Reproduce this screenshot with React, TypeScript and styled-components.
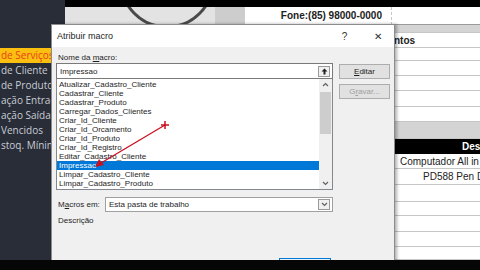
import styled, { createGlobalStyle } from "styled-components";

const GlobalStyle = createGlobalStyle`
  html, body { margin: 0; padding: 0; background: #000; }
  body { width: 480px; height: 270px; overflow: hidden; }
`;

const Page = styled.div`
  width: 480px;
  height: 270px;
  display: flex;
  flex-direction: column;
  background: #000;
`;
const Screen = styled.div`
  position: relative;
  height: 260px;
  display: grid;
  grid-template-columns: 65px 1fr;
  overflow: hidden;
`;
const BottomBand = styled.div`
  height: 10px;
  background: #060606;
`;

const Sidebar = styled.nav`
  background: #292d38;
  display: flex;
  flex-direction: column;
  padding-top: 48px;
`;
const NavItem = styled.div<{ $active?: boolean }>`
  height: 15px;
  line-height: 15px;
  font: 10px "Open Sans", sans-serif;
  white-space: nowrap;
  overflow: hidden;
  padding-left: 1px;
  color: ${p => (p.$active ? "#e8401c" : "#c8ccd4")};
  background: ${p => (p.$active ? "#fbbf10" : "transparent")};
`;

const Main = styled.div`
  display: flex;
  flex-direction: column;
  background: #fff;
  font-family: "Liberation Sans", Arial, sans-serif;
`;
const TopBand = styled.div`
  height: 7px;
  background: #000;
`;
const HeaderRow = styled.div`
  height: 18px;
  display: flex;
`;
const LogoArea = styled.div`
  width: 150px;
  background: #e3e3e3;
  overflow: hidden;
`;
const GrayCell = styled.div`
  width: 30px;
  background: #cdcdcd;
`;
const FoneCell = styled.div`
  width: 147px;
  box-sizing: border-box;
  padding-right: 9px;
  text-align: right;
  font-size: 10px;
  font-weight: bold;
  line-height: 18px;
  color: #222;
  border-right: 1px dashed #c8c8c8;
  border-bottom: 1px solid #9a9a9a;
`;
const BlankCell = styled.div`
  flex: 1;
  border-bottom: 1px solid #9a9a9a;
`;

const SheetBody = styled.div`
  flex: 1;
  display: flex;
`;
const Hidden = styled.div`
  width: 328px;
  background: #f0f0f0;
`;
const SheetCol = styled.div`
  flex: 1;
  display: flex;
  flex-direction: column;
  border-left: 1px solid #7a7a7a;
`;
type RowKind = "plain" | "gray" | "head" | "title";
const SheetRow = styled.div<{ $h: number; $kind: RowKind; $indent?: number }>`
  height: ${p => p.$h}px;
  box-sizing: border-box;
  display: flex;
  align-items: center;
  padding-left: ${p => p.$indent ?? 5}px;
  white-space: nowrap;
  overflow: hidden;
  font-size: 10px;
  font-weight: ${p => (p.$kind === "head" || p.$kind === "title" ? "bold" : "normal")};
  color: ${p => (p.$kind === "head" ? "#fff" : "#222")};
  background: ${p => (p.$kind === "gray" ? "#d4d4d4" : p.$kind === "head" ? "#000" : "#fff")};
  border-bottom: 1px solid ${p => (p.$kind === "head" ? "#000" : "#c6c6c6")};
`;

const Dialog = styled.div`
  position: absolute;
  left: 51px;
  top: 24px;
  width: 342px;
  height: 250px;
  background: #f0f0f0;
  border: 1px solid #8c8c8c;
  box-shadow: 2px 0 3px rgba(0, 0, 0, 0.3);
  font: 8px "Liberation Sans", Arial, sans-serif;
  color: #1e1e1e;
  display: flex;
  flex-direction: column;
`;
const TitleBar = styled.div`
  height: 22px;
  background: #fff;
  display: flex;
  align-items: center;
  padding-left: 5px;
`;
const Title = styled.span`
  flex: 1;
  font-size: 9px;
`;
const TitleBtn = styled.span`
  width: 33px;
  text-align: center;
  font-size: 10px;
  color: #333;
`;
const Body = styled.div`
  padding: 5px 4px 0 4px;
  display: grid;
  grid-template-columns: 277px 51px;
  column-gap: 6px;
`;
const Column = styled.div`
  display: flex;
  flex-direction: column;
`;
const Label = styled.div`
  height: 11px;
  line-height: 11px;
  padding-left: 2px;
`;
const InputBox = styled.div`
  height: 16px;
  box-sizing: border-box;
  background: #fff;
  border: 1px solid #7a7a7a;
  display: flex;
  align-items: center;
  padding-left: 3px;
`;
const InputText = styled.span`
  flex: 1;
`;
const SmallBtn = styled.span`
  width: 12px;
  height: 11px;
  margin-right: 2px;
  box-sizing: border-box;
  border: 1px solid #9a9a9a;
  background: #f0f0f0;
  display: flex;
  align-items: center;
  justify-content: center;
`;
const ListBox = styled.div`
  height: 111px;
  box-sizing: border-box;
  background: #fff;
  border: 1px solid #828790;
  border-top: none;
  display: flex;
`;
const Items = styled.div`
  flex: 1;
  padding-top: 1px;
`;
const Item = styled.div<{ $sel?: boolean }>`
  height: 9px;
  line-height: 9px;
  padding-left: 2px;
  white-space: nowrap;
  color: ${p => (p.$sel ? "#fff" : "#1e1e1e")};
  background: ${p => (p.$sel ? "#0078d7" : "transparent")};
`;
const ScrollBar = styled.div`
  width: 13px;
  background: #f0f0f0;
  display: flex;
  flex-direction: column;
  align-items: center;
`;
const ScrollArrow = styled.div`
  height: 11px;
  width: 13px;
  display: flex;
  align-items: center;
  justify-content: center;
`;
const Thumb = styled.div`
  width: 11px;
  height: 42px;
  margin-top: 2px;
  background: #cdcdcd;
`;
const Spacer = styled.div`
  flex: 1;
`;
const DlgButton = styled.div<{ $disabled?: boolean; $primary?: boolean }>`
  height: 15px;
  box-sizing: border-box;
  border: 1px solid ${p => (p.$primary ? "#0078d7" : "#adadad")};
  background: ${p => (p.$primary ? "#e5f1fb" : "#e1e1e1")};
  color: ${p => (p.$disabled ? "#a0a0a0" : "#1e1e1e")};
  display: flex;
  align-items: center;
  justify-content: center;
  & + & {
    margin-top: 5px;
  }
`;
const ButtonStack = styled.div`
  padding-top: 12px;
  display: flex;
  flex-direction: column;
`;
const MacrosRow = styled.div`
  margin: 7px 0 0 4px;
  display: flex;
  align-items: center;
  width: 277px;
`;
const MacrosLabel = styled.span`
  width: 47px;
  padding-left: 2px;
`;
const Select = styled.div`
  flex: 1;
  height: 15px;
  box-sizing: border-box;
  background: #fff;
  border: 1px solid #a0a0a0;
  display: flex;
  align-items: center;
  padding-left: 3px;
`;
const Descr = styled.div`
  margin: 4px 0 0 6px;
  height: 10px;
  line-height: 10px;
`;
const Footer = styled.div`
  margin-top: 32px;
  padding-left: 227px;
  width: 52px;
`;
const Overlay = styled.svg`
  position: absolute;
  left: 0;
  top: 0;
  pointer-events: none;
`;

const Chevron = ({ up }: { up?: boolean }) => (
  <svg width="7" height="5" viewBox="0 0 7 5">
    <path d={up ? "M1 4 L3.5 1.5 L6 4" : "M1 1 L3.5 3.5 L6 1"} fill="none" stroke="#606060" strokeWidth="1.2" />
  </svg>
);

const macros = [
  "Atualizar_Cadastro_Cliente",
  "Cadastrar_Cliente",
  "Cadastrar_Produto",
  "Carregar_Dados_Clientes",
  "Criar_Id_Cliente",
  "Criar_Id_Orcamento",
  "Criar_Id_Produto",
  "Criar_Id_Registro",
  "Editar_Cadastro_Cliente",
  "Impressao",
  "Limpar_Cadastro_Cliente",
  "Limpar_Cadastro_Produto",
];

const navItems = ["de Serviços", "de Cliente", "de Produtos", "ação Entrada", "ação Saída", "Vencidos", "stoq. Mínimo"];

const rows: { h: number; kind: RowKind; text?: string; indent?: number }[] = [
  { h: 8, kind: "gray" },
  { h: 15, kind: "title", text: "ntos", indent: 0 },
  { h: 13, kind: "plain" },
  { h: 15, kind: "plain" },
  { h: 15, kind: "plain" },
  { h: 16, kind: "plain" },
  { h: 15, kind: "plain" },
  { h: 17, kind: "gray" },
  { h: 15, kind: "head", text: "Des", indent: 68 },
  { h: 15, kind: "plain", text: "Computador All in", indent: 6 },
  { h: 16, kind: "plain", text: "PD588 Pen Dr", indent: 29 },
  { h: 17, kind: "plain" },
  { h: 14, kind: "plain" },
  { h: 16, kind: "plain" },
  { h: 15, kind: "plain" },
  { h: 13, kind: "plain" },
];

export default function App() {
  return (
    <Page>
      <GlobalStyle />
      <Screen>
        <Sidebar>
          {navItems.map((t, i) => (
            <NavItem key={t} $active={i === 0}>{t}</NavItem>
          ))}
        </Sidebar>
        <Main>
          <TopBand />
          <HeaderRow>
            <LogoArea>
              <svg width="150" height="18">
                <circle cx="102" cy="-26" r="46" fill="none" stroke="#4a4a4a" strokeWidth="3" />
              </svg>
            </LogoArea>
            <GrayCell />
            <FoneCell>Fone:(85) 98000-0000</FoneCell>
            <BlankCell />
          </HeaderRow>
          <SheetBody>
            <Hidden />
            <SheetCol>
              {rows.map((r, i) => (
                <SheetRow key={i} $h={r.h} $kind={r.kind} $indent={r.indent}>{r.text}</SheetRow>
              ))}
            </SheetCol>
          </SheetBody>
        </Main>

        <Dialog>
          <TitleBar>
            <Title>Atribuir macro</Title>
            <TitleBtn>?</TitleBtn>
            <TitleBtn>✕</TitleBtn>
          </TitleBar>
          <Body>
            <Column>
              <Label>Nome da <u>m</u>acro:</Label>
              <InputBox>
                <InputText>Impressao</InputText>
                <SmallBtn>
                  <svg width="7" height="7" viewBox="0 0 7 7">
                    <path d="M3.5 0.5 L6.5 3.5 H4.5 V6.5 H2.5 V3.5 H0.5 Z" fill="#222" />
                  </svg>
                </SmallBtn>
              </InputBox>
              <ListBox>
                <Items>
                  {macros.map(m => (
                    <Item key={m} $sel={m === "Impressao"}>{m}</Item>
                  ))}
                </Items>
                <ScrollBar>
                  <ScrollArrow><Chevron up /></ScrollArrow>
                  <Thumb />
                  <Spacer />
                  <ScrollArrow><Chevron /></ScrollArrow>
                </ScrollBar>
              </ListBox>
            </Column>
            <ButtonStack>
              <DlgButton><u>E</u>ditar</DlgButton>
              <DlgButton $disabled>G<u>r</u>avar...</DlgButton>
            </ButtonStack>
          </Body>
          <MacrosRow>
            <MacrosLabel>M<u>a</u>cros em:</MacrosLabel>
            <Select>
              <InputText>Esta pasta de trabalho</InputText>
              <SmallBtn><Chevron /></SmallBtn>
            </Select>
          </MacrosRow>
          <Descr>Descrição</Descr>
          <Footer>
            <DlgButton $primary />
          </Footer>
        </Dialog>

        <Overlay width="480" height="260">
          <line x1="165" y1="125" x2="101" y2="163" stroke="#c8101e" strokeWidth="1.3" />
          <path d="M95 167 L99 159 L104 165 Z" fill="#c8101e" />
          <path d="M161 125 H169 M165 121 V129" stroke="#c8101e" strokeWidth="1.5" />
        </Overlay>
      </Screen>
      <BottomBand />
    </Page>
  );
}
